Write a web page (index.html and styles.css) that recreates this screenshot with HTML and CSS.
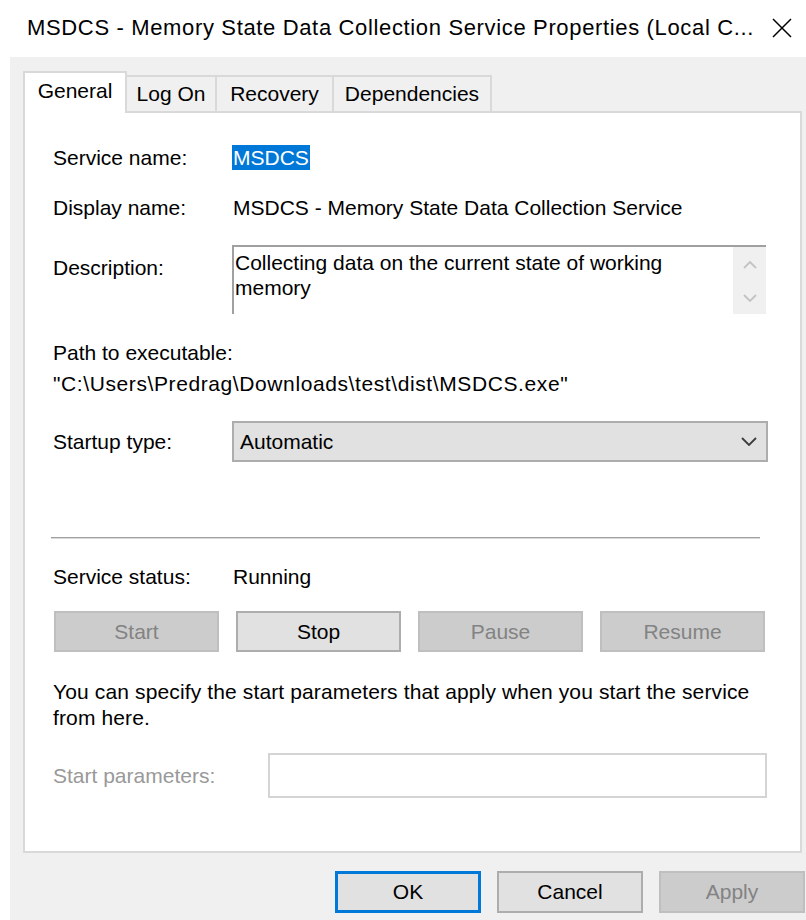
FILE: index.html
```html
<!DOCTYPE html>
<html lang="en">
<head>
<meta charset="utf-8">
<title>MSDCS Properties</title>
<link rel="stylesheet" href="styles.css">
</head>
<body>
<div class="window">
  <div class="titlebar">
    <span class="title">MSDCS - Memory State Data Collection Service Properties (Local C...</span>
    <svg class="close" viewBox="0 0 20 20" aria-hidden="true">
      <path d="M1 1 L19 19 M19 1 L1 19" stroke="#000" stroke-width="1.5" fill="none"/>
    </svg>
  </div>

  <div class="client">
    <div class="tabs">
      <div class="tab tab-active tab-general">General</div>
      <div class="tab tab-logon">Log On</div>
      <div class="tab tab-recovery">Recovery</div>
      <div class="tab tab-deps">Dependencies</div>
    </div>

    <div class="panel">
      <div class="field row-name">
        <span class="label">Service name:</span>
        <span class="value"><span class="selected">MSDCS</span></span>
      </div>
      <div class="field row-display">
        <span class="label">Display name:</span>
        <span class="value">MSDCS - Memory State Data Collection Service</span>
      </div>
      <div class="field row-desc">
        <span class="label label-desc">Description:</span>
        <div class="textbox">
          <div class="textbox-text">Collecting data on the current state of working memory</div>
          <div class="scrollbar">
            <svg class="arrow" viewBox="0 0 14 8" aria-hidden="true"><path d="M1 7 L7 1 L13 7" stroke="#c3c3c3" stroke-width="1.8" fill="none"/></svg>
            <svg class="arrow" viewBox="0 0 14 8" aria-hidden="true"><path d="M1 1 L7 7 L13 1" stroke="#c3c3c3" stroke-width="1.8" fill="none"/></svg>
          </div>
        </div>
      </div>
      <div class="row-path-label">Path to executable:</div>
      <div class="row-path">"C:\Users\Predrag\Downloads\test\dist\MSDCS.exe"</div>
      <div class="field row-startup">
        <span class="label">Startup type:</span>
        <div class="select">
          <span>Automatic</span>
          <svg class="chevron" viewBox="0 0 16 9" aria-hidden="true"><path d="M1 1 L8 8 L15 1" stroke="#3c3c3c" stroke-width="1.8" fill="none"/></svg>
        </div>
      </div>
      <div class="separator"></div>
      <div class="field row-status">
        <span class="label">Service status:</span>
        <span class="value">Running</span>
      </div>
      <div class="service-buttons">
        <div class="btn btn-disabled">Start</div>
        <div class="btn">Stop</div>
        <div class="btn btn-disabled">Pause</div>
        <div class="btn btn-disabled">Resume</div>
      </div>
      <p class="note">You can specify the start parameters that apply when you start the service from here.</p>
      <div class="field row-params">
        <span class="label label-params">Start parameters:</span>
        <div class="input"></div>
      </div>
    </div>

    <div class="dialog-buttons">
      <div class="btn btn-default">OK</div>
      <div class="btn">Cancel</div>
      <div class="btn btn-disabled">Apply</div>
    </div>
  </div>
</div>
</body>
</html>
```

FILE: styles.css
```css
* {
  box-sizing: border-box;
}

html,
body {
  margin: 0;
}

body {
  font-family: "Liberation Sans", Arial, sans-serif;
  font-size: 21px;
  color: #000;
  background: #fff;
}

.window {
  width: 806px;
  height: 920px;
  overflow: hidden;
  background: #fff;
}

/* Title bar */
.titlebar {
  height: 57px;
  display: flex;
  align-items: center;
  padding-left: 27px;
  padding-bottom: 2px;
}

.title {
  font-size: 22px;
  letter-spacing: 0.65px;
  line-height: 30px;
  white-space: nowrap;
}

.close {
  display: block;
  width: 20px;
  height: 20px;
  margin-left: auto;
  margin-right: 14px;
  flex: none;
}

/* Dialog client area */
.client {
  margin-left: 10px;
  height: 863px;
  background: #f0f0f0;
  padding-top: 14px;
}

/* Tab strip */
.tabs {
  display: flex;
  align-items: flex-end;
  height: 40px;
  margin-left: 13px;
  position: relative;
  z-index: 1;
}

.tab {
  height: 36px;
  display: flex;
  align-items: center;
  justify-content: center;
  border: 2px solid #d9d9d9;
  border-bottom: none;
  background: #f0f0f0;
  margin-left: -2px;
  white-space: nowrap;
}

.tab:first-child {
  margin-left: 0;
}

.tab-active {
  height: 42px;
  margin-bottom: -2px;
  padding-bottom: 4px;
  background: #fff;
  position: relative;
  z-index: 2;
}

.tab-general { width: 104px; }
.tab-logon { width: 92px; }
.tab-recovery { width: 119px; }
.tab-deps { width: 160px; }

/* Property page */
.panel {
  margin-left: 13px;
  width: 779px;
  height: 742px;
  border: 2px solid #d9d9d9;
  background: #fff;
  padding-left: 28px;
}

.field {
  display: flex;
  align-items: center;
}

.label {
  width: 180px;
  flex: none;
  white-space: nowrap;
}

.value {
  white-space: nowrap;
}

.selected {
  display: inline-block;
  background: #0078d7;
  color: #fff;
  line-height: 25px;
  padding: 0 1px;
  margin-left: -1px;
}

.row-name {
  margin-top: 32px;
  height: 25px;
}

.row-display {
  margin-top: 25px;
  height: 25px;
}

.row-desc {
  margin-top: 25px;
  align-items: flex-start;
}

.label-desc {
  padding-top: 10px;
  line-height: 26px;
}

.textbox {
  margin-left: -1px;
  width: 534px;
  height: 69px;
  border-top: 2px solid #a0a0a0;
  border-left: 2px solid #a0a0a0;
  display: flex;
}

.textbox-text {
  flex: 1;
  padding: 3px 0 0 1px;
  line-height: 25px;
}

.scrollbar {
  width: 33px;
  flex: none;
  background: #f0f0f0;
  display: flex;
  flex-direction: column;
  align-items: center;
  gap: 25px;
  padding-top: 14px;
}

.arrow {
  display: block;
  width: 14px;
  height: 8px;
}

.row-path-label {
  margin-top: 24px;
  line-height: 30px;
}

.row-path {
  line-height: 32px;
  letter-spacing: 0.6px;
  white-space: nowrap;
}

.row-startup {
  margin-top: 21px;
  height: 41px;
}

.select {
  margin-left: -1px;
  width: 536px;
  height: 41px;
  border: 2px solid #adadad;
  background: #e1e1e1;
  display: flex;
  align-items: center;
  justify-content: space-between;
  padding-left: 6px;
  padding-right: 9px;
}

.chevron {
  display: block;
  width: 16px;
  height: 9px;
}

.separator {
  margin-top: 75px;
  margin-left: -2px;
  width: 709px;
  height: 2px;
  border-top: 1px solid #a0a0a0;
  border-bottom: 1px solid #dadada;
}

.row-status {
  margin-top: 23px;
  height: 30px;
}

.service-buttons {
  margin-top: 19px;
  margin-left: 1px;
  display: grid;
  grid-template-columns: repeat(4, 165px);
  column-gap: 17px;
}

.btn {
  height: 41px;
  border: 2px solid #adadad;
  background: #e1e1e1;
  display: flex;
  align-items: center;
  justify-content: center;
}

.btn-disabled {
  background: #cccccc;
  border-color: #bfbfbf;
  color: #838383;
}

.note {
  margin: 27px 0 0;
  width: 720px;
  line-height: 26px;
  letter-spacing: 0.13px;
}

.row-params {
  margin-top: 22px;
  height: 45px;
}

.label-params {
  width: 215px;
  color: #999;
}

.input {
  width: 499px;
  height: 45px;
  border: 2px solid #d4d4d4;
  background: #fff;
}

/* OK / Cancel / Apply */
.dialog-buttons {
  display: flex;
  gap: 16px;
  margin-top: 18px;
  padding-left: 325px;
}

.dialog-buttons .btn {
  width: 146px;
  height: 42px;
  flex: none;
}

.dialog-buttons .btn-default {
  border: 3px solid #0078d7;
}
```
